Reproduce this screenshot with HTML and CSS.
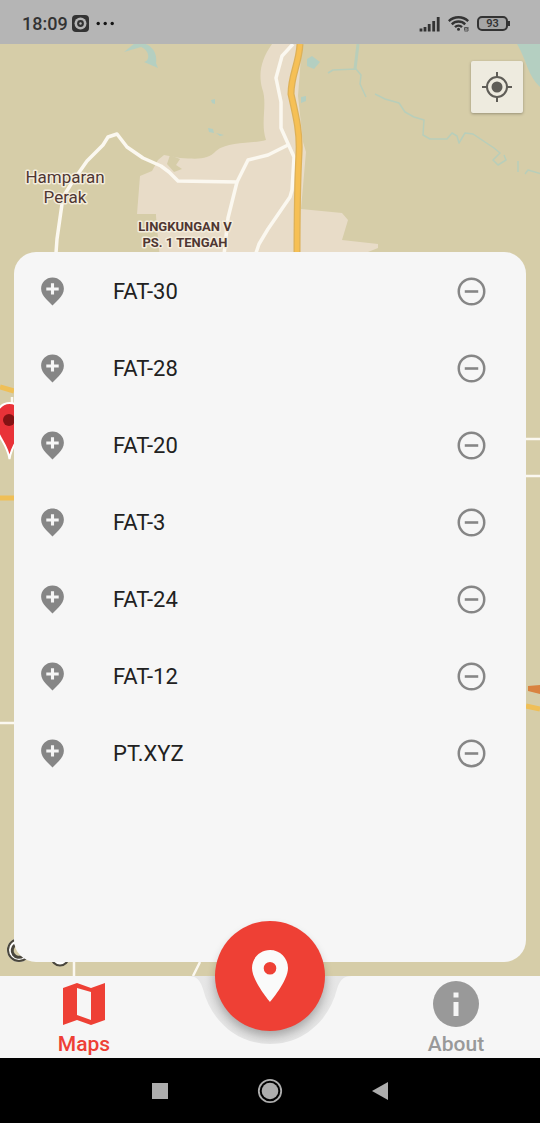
FILE: index.html
```html
<!DOCTYPE html>
<html lang="en">
<head>
<meta charset="utf-8">
<meta name="viewport" content="width=device-width, initial-scale=1">
<title>Maps</title>
<link rel="stylesheet" href="styles.css">
</head>
<body>
<svg class="sprite" aria-hidden="true">
  <symbol id="pin-plus" viewBox="0 0 22 28">
    <path fill="currentColor" fill-rule="evenodd" d="M11 .5C4.800 .5 0 5.300 0 11.300c0 3.700 2 7 5 10.200L11 27.500l6-6c3-3.200 5-6.500 5-10.200C22 5.300 17.200 .5 11 .5zM9.500 6h3v4.200H17v2.800h-4.500V17h-3v-4H5v-2.800h4.500z"/>
  </symbol>
  <symbol id="minus-circle" viewBox="0 0 28 28">
    <circle cx="14" cy="14" r="12.300" fill="none" stroke="currentColor" stroke-width="2.400"/>
    <path d="M7.500 14h13" stroke="currentColor" stroke-width="2.500"/>
  </symbol>
</svg>
<div class="screen">
  <header class="status">
    <div class="status-group">
      <time class="clock">18:09</time>
      <svg width="17" height="17" viewBox="0 0 17 17"><rect width="17" height="17" rx="4" fill="#333"/><circle cx="8.500" cy="8.500" r="6" fill="#b5b5b5"/><circle cx="8.500" cy="8.500" r="3.400" fill="#333"/><circle cx="8.500" cy="8.500" r="1.200" fill="#b5b5b5"/></svg>
      <svg class="dots" width="19" height="5" viewBox="0 0 19 5" fill="#151515"><circle cx="2.200" cy="2.500" r="1.700"/><circle cx="9.200" cy="2.500" r="1.700"/><circle cx="16.200" cy="2.500" r="1.700"/></svg>
    </div>
    <div class="status-group status-right">
      <svg width="21" height="16" viewBox="0 0 21 16" stroke="#333" stroke-width="2.800"><path d="M2 15.500v-3M6 15.500V11M10.200 15.500V8M14.700 15.500V5M19.200 15.500V1"/></svg>
      <svg width="21" height="17" viewBox="0 0 21 17" fill="none" stroke="#333" stroke-width="2.400"><path d="M.8 6.200a14 14 0 0 1 19.400 0M3.800 9.300a9.500 9.500 0 0 1 13.400 0M7 12.200a5 5 0 0 1 7 0"/><circle cx="10.500" cy="14.300" r="1.500" fill="#333" stroke="none"/><path d="M16.500 15.500v-3h3v1.500h-2.500M20 12v4h-3.500" stroke="#555" stroke-width="1"/></svg>
      <div class="battery">93</div>
    </div>
  </header>

  <main class="map">
    <svg class="map-art" viewBox="0 44 540 932" preserveAspectRatio="xMidYMin slice">
      <rect y="44" width="540" height="932" fill="#d6cda8"/>
      <path fill="#e8dcc8" d="M272 44C262 58 258 72 262 88C268 104 260 122 266 140C252 144 228 141 216 151C208 160 198 159 180 158L164 155L158 160L152 171L140 176L137 214L156 216L160 260H367L368 252L378 248V244L342 240L348 220L342 213L301 209L306 152L303 142L298 96L302 44z"/>
      <path fill="#d6cda8" d="M170 155l10 4-4 6 6 4-8 3-7-8zM137 214h19v3h-19z"/>
      <g fill="#b4cfc1">
        <path d="M517 44h23v43c-13-13-12-24-23-43zM124 52l11-9c14-2 23 8 21 20l2 5-14-6c7-2 5-12-3-15z"/>
        <path d="M307 59l5-3 8 6-6 7-7-3zM301 97l5-1v5l-5 2zM211 100l4-1v5l-3-1zM208 128l5 1 1 4-5-1zM216 133l8 2-4 1z"/>
      </g>
      <g fill="none" stroke="#b8ceba" stroke-width="1.500" stroke-linejoin="round">
        <path stroke-width="3" d="M358 44l-3 25"/>
        <path d="M328 73l5-3 23-1 5 6-1 9 6 13M375 94l10 5 14 4 6 9 9 5 10 3-1 15 7 4h17l5-6 5 3 2 7 6-10 8 1 21 14 6 5-7 7 5 5 8-5-2-5M518 161v11M525 174l3-4 14 4"/>
      </g>
      <g fill="none" stroke="#fbf8f0" stroke-width="3.500" stroke-linejoin="round">
        <path d="M56 253l1-14 6-42 10-16 14-20 16-16 5-8 9-3 10 13 16 11 18 8 8 6 9 9 59 1 11-22 20-5 20-10"/>
        <path d="M224 255l4-37 9-36"/>
        <path d="M293 44l-11 12-6 22 5 24v26l13 29-2 33-2 7-22 32-9 15-3 9"/>
        <path stroke-width="2.500" d="M526 439h14M526 476h14M0 723h15M12 397v10M74 962v14M200 962l-7 14"/>
      </g>
      <path fill="none" stroke="#ddb159" stroke-width="7" d="M300 44c-1 20-9 31-9 50 5 22 9 38 8 59-2 38-2 65-2 104"/>
      <path fill="none" stroke="#f6c055" stroke-width="4.500" d="M300 44c-1 20-9 31-9 50 5 22 9 38 8 59-2 38-2 65-2 104"/>
      <g fill="none" stroke="#efbf57" stroke-width="5"><path d="M0 387l14 4M0 498h14M526 706l14 3"/></g>
      <path fill="#d9823f" d="M528 686l12-1v9l-12-3z"/>
      <path fill="#e93238" stroke="#fff" stroke-width="2" d="M9.500 459C7 442-4 437-5 421c0-10 6-18 14.500-18S24 411 24 421c-1 16-12 21-14.500 38z"/>
      <circle cx="9" cy="420" r="6" fill="#841214"/>
      <g class="place-label" text-anchor="middle">
        <text x="65" y="183">Hamparan</text>
        <text x="65" y="203">Perak</text>
      </g>
      <g class="place-label place-label-strong" text-anchor="middle">
        <text x="185" y="231">LINGKUNGAN V</text>
        <text x="185" y="247">PS. 1 TENGAH</text>
      </g>
      <g fill="none"><circle cx="19" cy="950" r="9" stroke="#fff" stroke-width="6"/><circle cx="19" cy="950" r="11" stroke="#4a473d" stroke-width="2"/><path d="M15 945a6 6 0 0 0 8 11" stroke="#4a473d" stroke-width="3"/><circle cx="60" cy="957" r="6" stroke="#fff" stroke-width="5"/><circle cx="60" cy="957" r="8.500" stroke="#4a473d" stroke-width="2.200"/></g>
    </svg>
    <button class="locate" type="button" aria-label="My location">
      <svg width="30" height="30" viewBox="0 0 30 30" fill="none" stroke="#5f5d57" stroke-width="2"><circle cx="15" cy="15" r="10"/><circle cx="15" cy="15" r="5.500" fill="#5f5d57" stroke="none"/><path d="M15 0v5M15 25v5M0 15h5M25 15h5"/></svg>
    </button>
    <section class="panel" aria-label="Locations">
      <ul class="list">
        <li class="row"><svg class="pin"><use href="#pin-plus"/></svg><span class="name">FAT-30</span><button class="remove" type="button" aria-label="Remove FAT-30"><svg><use href="#minus-circle"/></svg></button></li>
        <li class="row"><svg class="pin"><use href="#pin-plus"/></svg><span class="name">FAT-28</span><button class="remove" type="button" aria-label="Remove FAT-28"><svg><use href="#minus-circle"/></svg></button></li>
        <li class="row"><svg class="pin"><use href="#pin-plus"/></svg><span class="name">FAT-20</span><button class="remove" type="button" aria-label="Remove FAT-20"><svg><use href="#minus-circle"/></svg></button></li>
        <li class="row"><svg class="pin"><use href="#pin-plus"/></svg><span class="name">FAT-3</span><button class="remove" type="button" aria-label="Remove FAT-3"><svg><use href="#minus-circle"/></svg></button></li>
        <li class="row"><svg class="pin"><use href="#pin-plus"/></svg><span class="name">FAT-24</span><button class="remove" type="button" aria-label="Remove FAT-24"><svg><use href="#minus-circle"/></svg></button></li>
        <li class="row"><svg class="pin"><use href="#pin-plus"/></svg><span class="name">FAT-12</span><button class="remove" type="button" aria-label="Remove FAT-12"><svg><use href="#minus-circle"/></svg></button></li>
        <li class="row"><svg class="pin"><use href="#pin-plus"/></svg><span class="name">PT.XYZ</span><button class="remove" type="button" aria-label="Remove PT.XYZ"><svg><use href="#minus-circle"/></svg></button></li>
      </ul>
    </section>
  </main>

  <nav class="tabs">
    <button class="tab tab-active" type="button">
      <svg width="46" height="46" viewBox="0 0 46 46"><path fill="currentColor" fill-rule="evenodd" d="M2 7l14-5 14 5 14-5v37l-14 5-14-5-14 5zM16 7v27l14 5V11z"/></svg>
      <span>Maps</span>
    </button>
    <div class="fab-slot">
      <svg class="notch" width="164" height="70" viewBox="0 0 164 70">
        <defs><radialGradient id="shade" gradientUnits="userSpaceOnUse" cx="82" cy="4" r="66"><stop offset=".76" stop-color="#cfcfcf"/><stop offset=".9" stop-color="#dedede"/><stop offset="1" stop-color="#e6e6e6"/></radialGradient></defs>
        <path fill="url(#shade)" d="M0 0C9 0 12 4 15 13C23 45 49 68 82 68S141 45 149 13C152 4 155 0 164 0z"/>
      </svg>
      <button class="fab" type="button" aria-label="Add location">
        <svg width="36" height="52" viewBox="0 0 36 52"><path fill="#fafafa" fill-rule="evenodd" d="M18 0C8 0 0 8 0 18c0 13 18 34 18 34s18-21 18-34C36 8 28 0 18 0zm0 12a6.300 6.300 0 1 1 0 12.600A6.300 6.300 0 0 1 18 12z"/></svg>
      </button>
    </div>
    <button class="tab" type="button">
      <svg width="46" height="46" viewBox="0 0 46 46"><circle cx="23" cy="23" r="23" fill="currentColor"/><path fill="#f6f6f6" d="M20.500 11.500h5v5h-5zM20.500 21h5v14h-5z"/></svg>
      <span>About</span>
    </button>
  </nav>

  <footer class="system">
    <button type="button" aria-label="Recent apps"><svg width="26" height="26" viewBox="0 0 26 26"><path fill="#adadad" d="M5 5h16v16H5z"/></svg></button>
    <button type="button" aria-label="Home"><svg width="26" height="26" viewBox="0 0 26 26"><circle cx="13" cy="13" r="11.200" fill="none" stroke="#adadad" stroke-width="1.800"/><circle cx="13" cy="13" r="8.300" fill="#adadad"/></svg></button>
    <button type="button" aria-label="Back"><svg width="26" height="26" viewBox="0 0 26 26"><path fill="#adadad" d="M5 13l16-9v18z"/></svg></button>
  </footer>
</div>
</body>
</html>
```

FILE: styles.css
```css
* { box-sizing: border-box; }
body { margin: 0; font-family: Roboto, sans-serif; background: #000; }
button { border: 0; padding: 0; background: none; font: inherit; color: inherit; cursor: pointer; }
svg { display: block; }
.sprite { position: absolute; width: 0; height: 0; }
.screen { min-height: 100vh; display: flex; flex-direction: column; }

.status { height: 44px; padding: 3px 32px 0 22px; display: flex; align-items: center; justify-content: space-between; background: #b5b5b5; color: #333; }
.status-group { display: flex; align-items: center; gap: 4px; }
.status-right { gap: 8px; }
.clock { font-size: 18px; font-weight: 500; }
.dots { margin-left: 3px; }
.battery { position: relative; width: 31px; height: 15px; border: 2px solid #333; border-radius: 5px; background: #a5a5a5; font-size: 11px; font-weight: 600; line-height: 11px; text-align: center; }
.battery::after { content: ""; position: absolute; right: -4px; top: 3px; width: 2px; height: 5px; background: #333; }

.map { position: relative; flex: 1; display: flex; padding: 208px 14px 14px; background: #d6cda8; }
.map-art { position: absolute; inset: 0; width: 100%; height: 100%; }
.place-label { font-size: 17px; fill: #4f3732; stroke: #f4eddd; stroke-width: 3px; stroke-linejoin: round; paint-order: stroke; }
.place-label-strong { font-size: 13px; font-weight: 700; }
.locate { position: absolute; top: 17px; right: 17px; width: 52px; height: 52px; display: grid; place-items: center; background: #eeebdf; border-radius: 2px; box-shadow: 0 1px 3px rgba(0, 0, 0, .3); }

.panel { position: relative; flex: 1; background: #f6f6f6; border-radius: 22px; }
.list { margin: 0; padding: 1px 0 0; list-style: none; }
.row { height: 77px; padding: 0 40px 0 27px; display: flex; align-items: center; color: #868686; }
.pin { width: 23px; height: 29px; }
.name { flex: 1; margin-left: 49px; font-size: 22px; color: #212121; }
.remove, .remove svg { width: 29px; height: 29px; }

.tabs { height: 82px; display: flex; justify-content: space-between; background: #f6f6f6; }
.tab { width: 168px; padding-top: 5px; display: flex; flex-direction: column; align-items: center; color: #999; font-size: 21px; line-height: 24px; font-weight: 500; gap: 5px; }
.tab-active { color: #ee4035; }
.fab-slot { position: relative; width: 164px; }
.notch { margin: 0 auto; }
.fab { position: absolute; left: 50%; top: 0; width: 110px; height: 110px; transform: translate(-50%, -50%); display: grid; place-items: center; border-radius: 50%; background: #ee4035; box-shadow: 0 5px 9px rgba(0, 0, 0, .18); }

.system { height: 65px; display: flex; align-items: center; justify-content: center; gap: 84px; background: #000; }
```
